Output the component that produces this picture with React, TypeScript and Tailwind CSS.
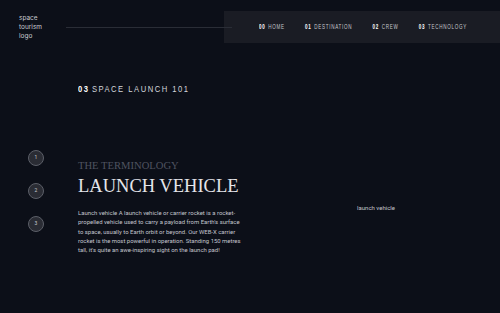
const navItems = [
  { num: "00", label: "HOME" },
  { num: "01", label: "DESTINATION" },
  { num: "02", label: "CREW" },
  { num: "03", label: "TECHNOLOGY" },
];

const paragraph = [
  "Launch vehicle A launch vehicle or carrier rocket is a rocket-",
  "propelled vehicle used to carry a payload from Earth's surface",
  "to space, usually to Earth orbit or beyond. Our WEB-X carrier",
  "rocket is the most powerful in operation. Standing 150 metres",
  "tall, it's quite an awe-inspiring sight on the launch pad!",
];

export default function App() {
  return (
    <div className="w-[500px] h-[313px] bg-[#0c0f18] text-white overflow-hidden font-['Roboto',sans-serif]">
      <header className="flex items-center pt-[11px]">
        <div className="pl-[19px] w-[66px] text-[6.5px] leading-[9px] text-[#c9cbd1] font-['Inter',sans-serif]">
          <div>space</div>
          <div>tourism</div>
          <div>logo</div>
        </div>
        <div className="flex-1 h-px bg-[#2a2d36] -mr-[8px] relative z-10" />
        <nav className="w-[276px] h-[32px] bg-[#1a1c24] flex items-center pl-[35px]">
          <div className="flex gap-[29px] scale-x-[0.7] origin-left font-['Liberation_Sans',sans-serif]">
            {navItems.map((item) => (
              <div key={item.num} className="flex gap-[4px] text-[6.5px] tracking-[1px] text-[#c6c8cc] whitespace-nowrap">
                <span className="font-bold text-white">{item.num}</span>
                <span>{item.label}</span>
              </div>
            ))}
          </div>
        </nav>
      </header>

      <h1 className="pl-[78px] mt-[39px] h-[14px] flex items-center leading-none">
        <span className="inline-block scale-x-[0.8] origin-left whitespace-nowrap text-[9.5px] tracking-[1.9px] text-[#d4d6dc] font-['Liberation_Sans',sans-serif]">
          <span className="font-bold text-white mr-[3px]">03</span>
          SPACE LAUNCH 101
        </span>
      </h1>

      <div className="flex mt-[54px]">
        <div className="w-[78px] pl-[28px] flex flex-col gap-[17px]">
          {[1, 2, 3].map((n) => (
            <div
              key={n}
              className="w-[16px] h-[16px] rounded-full border border-[#5c5f68] bg-[#2a2c34] flex items-center justify-center text-[5px] text-[#c8cad1]"
            >
              {n}
            </div>
          ))}
        </div>

        <div className="w-[172px] pt-[10px]">
          <div className="font-['Liberation_Serif',serif] text-[10.6px] leading-[12px] text-[#4f5360]">
            THE TERMINOLOGY
          </div>
          <div className="font-['Liberation_Serif',serif] text-[18.5px] leading-[22px] text-[#e4e5ea] mt-[3px]">
            LAUNCH VEHICLE
          </div>
          <p className="mt-[11px] text-[5.95px] leading-[9.3px] text-[#c2c4cc] whitespace-nowrap">
            {paragraph.map((line) => (
              <span key={line} className="block">{line}</span>
            ))}
          </p>
        </div>

        <div className="flex-1 flex justify-center pt-[53px]">
          <span className="text-[6px] text-[#c2c4cc] ml-[2px]">launch vehicle</span>
        </div>
      </div>
    </div>
  );
}
